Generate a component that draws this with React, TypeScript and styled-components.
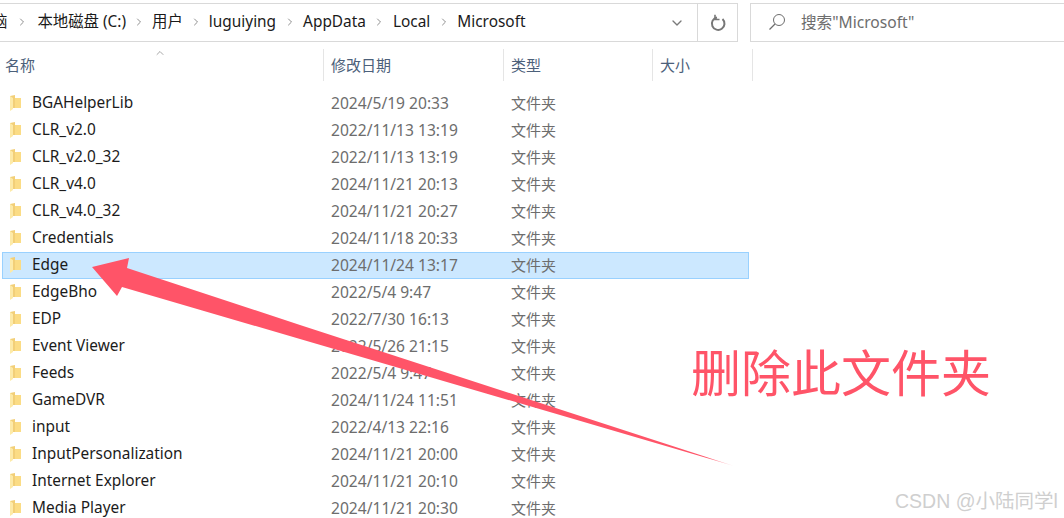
import React from 'react';
import styled, { createGlobalStyle } from 'styled-components';
import { ChevronDown, ChevronRight, ChevronUp } from 'lucide-react';

const GlobalStyle = createGlobalStyle`
  html, body {
    margin: 0;
    height: 100%;
    overflow: hidden;
    background: #fff;
  }
  body {
    font-family: "Noto Sans", "Noto Sans CJK SC", sans-serif;
  }
`;

const Page = styled.div`
  position: relative;
  width: 1064px;
  height: 518px;
  overflow: hidden;
  background: #fff;
  display: flex;
  flex-direction: column;
`;

const Toolbar = styled.div`
  display: flex;
  gap: 12px;
  padding-top: 3px;
  height: 39px;
  flex: none;
`;

const AddressBar = styled.div`
  width: 738px;
  height: 39px;
  box-sizing: border-box;
  flex: none;
  border: 1px solid #d9d9d9;
  border-left: none;
  display: flex;
  align-items: center;
`;

const Crumbs = styled.div`
  flex: 1;
  display: flex;
  align-items: center;
  overflow: hidden;
  font-size: 15.4px;
  color: #1a1a1a;
  margin-left: -8px;
  padding-bottom: 2px;
`;

const Crumb = styled.span`
  white-space: nowrap;
  line-height: 20px;
`;

const CrumbArrow = styled.span<{ $gap: number }>`
  display: flex;
  justify-content: center;
  width: ${props => props.$gap}px;
  color: #8f8f8f;
`;

const DropButton = styled.div`
  width: 40px;
  height: 100%;
  display: flex;
  align-items: center;
  justify-content: center;
  color: #7a7a7a;
`;

const RefreshButton = styled.div`
  width: 39px;
  height: 100%;
  border-left: 1px solid #d9d9d9;
  display: flex;
  align-items: center;
  justify-content: center;
`;

const SearchBox = styled.div`
  flex: 1;
  height: 39px;
  box-sizing: border-box;
  border: 1px solid #d9d9d9;
  border-right: none;
  display: flex;
  align-items: center;
  gap: 15px;
  padding: 0 0 2px 17px;
  font-size: 15.6px;
  color: #6d6d6d;
`;

const HeaderRow = styled.div`
  position: relative;
  display: grid;
  grid-template-columns: 324px 180px 149px 100px;
  height: 32px;
  margin-top: 7px;
  flex: none;
`;

const HeaderCell = styled.div<{ $first?: boolean }>`
  display: flex;
  align-items: center;
  padding: 0 0 2px ${props => (props.$first ? 5 : 7)}px;
  font-size: 15px;
  color: #4c607a;
  border-right: 1px solid #e5e5e5;
`;

const SortMark = styled.span`
  position: absolute;
  left: 154px;
  top: -2px;
  color: #8a8a8a;
  display: flex;
`;

const List = styled.div`
  margin-top: 9px;
  display: flex;
  flex-direction: column;
`;

const Row = styled.div<{ $selected?: boolean }>`
  display: grid;
  grid-template-columns: 322px 180px 1fr;
  width: 747px;
  height: 27px;
  box-sizing: border-box;
  margin-left: 2px;
  flex: none;
  align-items: center;
  font-size: 15.6px;
  background: ${props => (props.$selected ? '#cce8ff' : 'transparent')};
  border: 1px solid ${props => (props.$selected ? '#99d1ff' : 'transparent')};
`;

const NameCell = styled.div`
  display: flex;
  align-items: center;
  gap: 10px;
  padding-left: 6px;
  color: #1b1b1b;
  font-size: 15.4px;
  white-space: nowrap;
  line-height: 22px;
  height: 22px;
  margin-top: -2px;
`;

const DateCell = styled.div`
  color: #6d6d6d;
  padding-left: 6px;
  white-space: nowrap;
  margin-top: -2px;
`;

const TypeCell = styled.div`
  color: #6d6d6d;
  font-size: 15px;
  padding-left: 6px;
  margin-top: -2px;
`;

const ArrowLayer = styled.svg`
  position: absolute;
  left: 0;
  top: 0;
  pointer-events: none;
`;

const Callout = styled.div`
  position: absolute;
  left: 691px;
  top: 334px;
  font-family: "Noto Sans CJK SC", sans-serif;
  font-size: 50px;
  line-height: 72px;
  color: #ff5468;
  white-space: nowrap;
`;

const Watermark = styled.div`
  position: absolute;
  left: 895px;
  top: 487px;
  font-family: "Liberation Sans", "Noto Sans CJK SC", sans-serif;
  font-size: 19.5px;
  line-height: 28px;
  color: #cfcfcf;
  white-space: nowrap;
`;

const FolderIcon = () => (
  <svg width="13" height="18" viewBox="0 0 13 18">
    <path d="M1 2 L6 1 L6 14 L2 14 Z" fill="#f2cf78" />
    <path d="M6 4 L12 4 L12 14 L6 14 Z" fill="#fbdc85" />
    <path d="M1 2 L4 4 L4 15 L1 17 Z" fill="#fdeaa8" />
  </svg>
);

const RefreshIcon = () => (
  <svg width="18" height="18" viewBox="0 0 18 18" fill="none" stroke="#777" strokeWidth="2">
    <path d="M13.5 5 A6.3 6.3 0 1 1 8 3.4" />
    <path d="M6 0.8 L6 5.5 L10.5 5.5" strokeWidth="1.6" />
  </svg>
);

const SearchIcon = () => (
  <svg width="18" height="18" viewBox="0 0 18 18" fill="none" stroke="#6d6d6d" strokeWidth="1">
    <circle cx="11" cy="7" r="5.5" />
    <path d="M7 11 L1.5 16.5" strokeWidth="1.2" />
  </svg>
);

const crumbs: [string, number][] = [
  ['脑', 30],
  ['本地磁盘 (C:)', 26],
  ['用户', 26],
  ['luguiying', 27],
  ['AppData', 27],
  ['Local', 27],
  ['Microsoft', 0],
];

const rows = [
  ['BGAHelperLib', '2024/5/19 20:33'],
  ['CLR_v2.0', '2022/11/13 13:19'],
  ['CLR_v2.0_32', '2022/11/13 13:19'],
  ['CLR_v4.0', '2024/11/21 20:13'],
  ['CLR_v4.0_32', '2024/11/21 20:27'],
  ['Credentials', '2024/11/18 20:33'],
  ['Edge', '2024/11/24 13:17'],
  ['EdgeBho', '2022/5/4 9:47'],
  ['EDP', '2022/7/30 16:13'],
  ['Event Viewer', '2022/5/26 21:15'],
  ['Feeds', '2022/5/4 9:47'],
  ['GameDVR', '2024/11/24 11:51'],
  ['input', '2022/4/13 22:16'],
  ['InputPersonalization', '2024/11/21 20:00'],
  ['Internet Explorer', '2024/11/21 20:10'],
  ['Media Player', '2024/11/21 20:30'],
];

export default function App() {
  return (
    <Page>
      <GlobalStyle />
      <Toolbar>
        <AddressBar>
          <Crumbs>
            {crumbs.map(([label, gap]) => (
              <React.Fragment key={label}>
                <Crumb>{label}</Crumb>
                {gap > 0 && (
                  <CrumbArrow $gap={gap}>
                    <ChevronRight size={12} strokeWidth={2} />
                  </CrumbArrow>
                )}
              </React.Fragment>
            ))}
          </Crumbs>
          <DropButton>
            <ChevronDown size={16} strokeWidth={2} />
          </DropButton>
          <RefreshButton>
            <RefreshIcon />
          </RefreshButton>
        </AddressBar>
        <SearchBox>
          <SearchIcon />
          搜索"Microsoft"
        </SearchBox>
      </Toolbar>
      <HeaderRow>
        <SortMark>
          <ChevronUp size={12} strokeWidth={1.5} />
        </SortMark>
        <HeaderCell $first>名称</HeaderCell>
        <HeaderCell>修改日期</HeaderCell>
        <HeaderCell>类型</HeaderCell>
        <HeaderCell>大小</HeaderCell>
      </HeaderRow>
      <List>
        {rows.map(([name, date]) => (
          <Row key={name} $selected={name === 'Edge'}>
            <NameCell>
              <FolderIcon />
              {name}
            </NameCell>
            <DateCell>{date}</DateCell>
            <TypeCell>文件夹</TypeCell>
          </Row>
        ))}
      </List>
      <ArrowLayer width="1064" height="518" viewBox="0 0 1064 518">
        <defs>
          <linearGradient id="tail" gradientUnits="userSpaceOnUse" x1="92" y1="267" x2="732" y2="465">
            <stop offset="0.96" stopColor="#ff5468" />
            <stop offset="1" stopColor="#ff5468" stopOpacity="0.3" />
          </linearGradient>
        </defs>
        <polygon points="92,267 129,258 127,268 300,325 734,466 300,339 122,287 117,296" fill="url(#tail)" />
      </ArrowLayer>
      <Callout>删除此文件夹</Callout>
      <Watermark>CSDN @小陆同学l</Watermark>
    </Page>
  );
}
